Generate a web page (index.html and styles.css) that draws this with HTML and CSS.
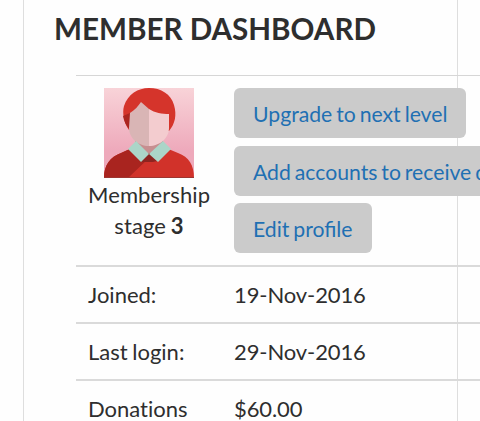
FILE: index.html
```html
<!DOCTYPE html>
<html lang="en">
<head>
    <meta charset="UTF-8">
    <meta name="viewport" content="width=device-width, initial-scale=1.0">
    <title>Member Dashboard</title>
    <link rel="stylesheet" href="styles.css">
</head>
<body>
    <div class="container">
        <h1>Member Dashboard</h1>
        <table class="dashboard">
            <tr>
                <td class="member">
                    <svg class="avatar" viewBox="0 0 90 90">
                        <defs>
                            <linearGradient id="bg" x1="0" y1="0" x2="0" y2="1">
                                <stop offset="0" stop-color="#f8d3d8"/>
                                <stop offset="0.7" stop-color="#eea9bb"/>
                            </linearGradient>
                        </defs>
                        <rect width="90" height="90" fill="url(#bg)"/>
                        <!-- hair -->
                        <path d="M25 42C20 35 18 25 20 18C24 6 34 0 45 0C57 0 67 6 70 17C73 27 71 36 65 43Z" fill="#d5342b"/>
                        <path d="M19 28L26 25V42C22 38 20 33 19 28Z" fill="#ab2520"/>
                        <!-- body -->
                        <path d="M0 90C0 77 6 69 17 65L28 60H62L74 65C85 69 90 77 90 90Z" fill="#d1322a"/>
                        <path d="M0 90C0 77 6 69 17 65L28 60L45 66V70L24 90Z" fill="#a9241f"/>
                        <path d="M31 50H59V60L45 67L31 60Z" fill="#c78f90"/>
                        <path d="M45 65L53 73L49 74H41L36 74Z" fill="#8d2420"/>
                        <!-- face -->
                        <path d="M26 25C31 22 34 18 37 14L45 21V58C34 58 25 50 25 40Z" fill="#d9b5b5"/>
                        <path d="M45 21C51 25 58 26 65 26V40C65 50 56 58 45 58Z" fill="#f3cccf"/>
                        <!-- collar -->
                        <path d="M32 53L45 66L37 74L24 61Z" fill="#abd5c8"/>
                        <path d="M59 53L67 61L54 74L45 66Z" fill="#abd5c8"/>
                        <rect y="89" width="90" height="1" fill="#9d3530"/>
                    </svg>
                    <div class="stage">Membership<br>stage <b>3</b></div>
                </td>
                <td>
                    <div class="actions">
                        <a class="button">Upgrade to next level</a>
                        <a class="button">Add accounts to receive donations</a>
                        <a class="button">Edit profile</a>
                    </div>
                </td>
            </tr>
            <tr>
                <td>Joined:</td>
                <td class="value">19-Nov-2016</td>
            </tr>
            <tr>
                <td>Last login:</td>
                <td class="value">29-Nov-2016</td>
            </tr>
            <tr>
                <td>Donations</td>
                <td class="value">$60.00</td>
            </tr>
        </table>
    </div>
</body>
</html>
```
FILE: styles.css
```css
* {
    box-sizing: border-box;
}

body {
    margin: 0;
    height: 100vh;
    overflow: hidden;
    background-color: #fefefe;
    color: #2e2e2e;
    font-family: Lato, sans-serif;
    font-size: 22px;
    line-height: 31px;
}

.container {
    width: 435px;
    height: 421px;
    margin-left: 23px;
    padding: 8px 30px 0;
    border: 1px solid #dedede;
    border-width: 0 1px;
}

h1 {
    margin: 0 0 25px;
    font-size: 29.6px;
    font-weight: 700;
    line-height: 42px;
    text-transform: uppercase;
    white-space: nowrap;
}

.dashboard {
    width: 520px;
    margin-left: 22px;
    border-spacing: 0;
    table-layout: fixed;
}

.dashboard td {
    padding: 12px;
    border-top: 2px solid #dadada;
    vertical-align: top;
    white-space: nowrap;
    font-variant-ligatures: none;
    word-spacing: -1px;
}

.dashboard td:first-child {
    width: 146px;
}

.dashboard tr:first-child td {
    border-top: 1px solid #d6d6d6;
}

.dashboard .value {
    letter-spacing: -0.1px;
}

.dashboard .member {
    text-align: center;
}

.avatar {
    display: block;
    width: 90px;
    height: 90px;
    margin: 0 auto;
}

.stage {
    padding-top: 1px;
    letter-spacing: 0.1px;
}

.actions {
    display: flex;
    flex-direction: column;
    align-items: flex-start;
    gap: 7.5px;
}

.button {
    height: 50px;
    padding: 0 19px;
    border-radius: 6px;
    background-color: #cbcbcb;
    color: #1f70b3;
    font-size: 21.2px;
    font-variant-ligatures: normal;
    line-height: 52px;
    word-spacing: -1.5px;
}
```
